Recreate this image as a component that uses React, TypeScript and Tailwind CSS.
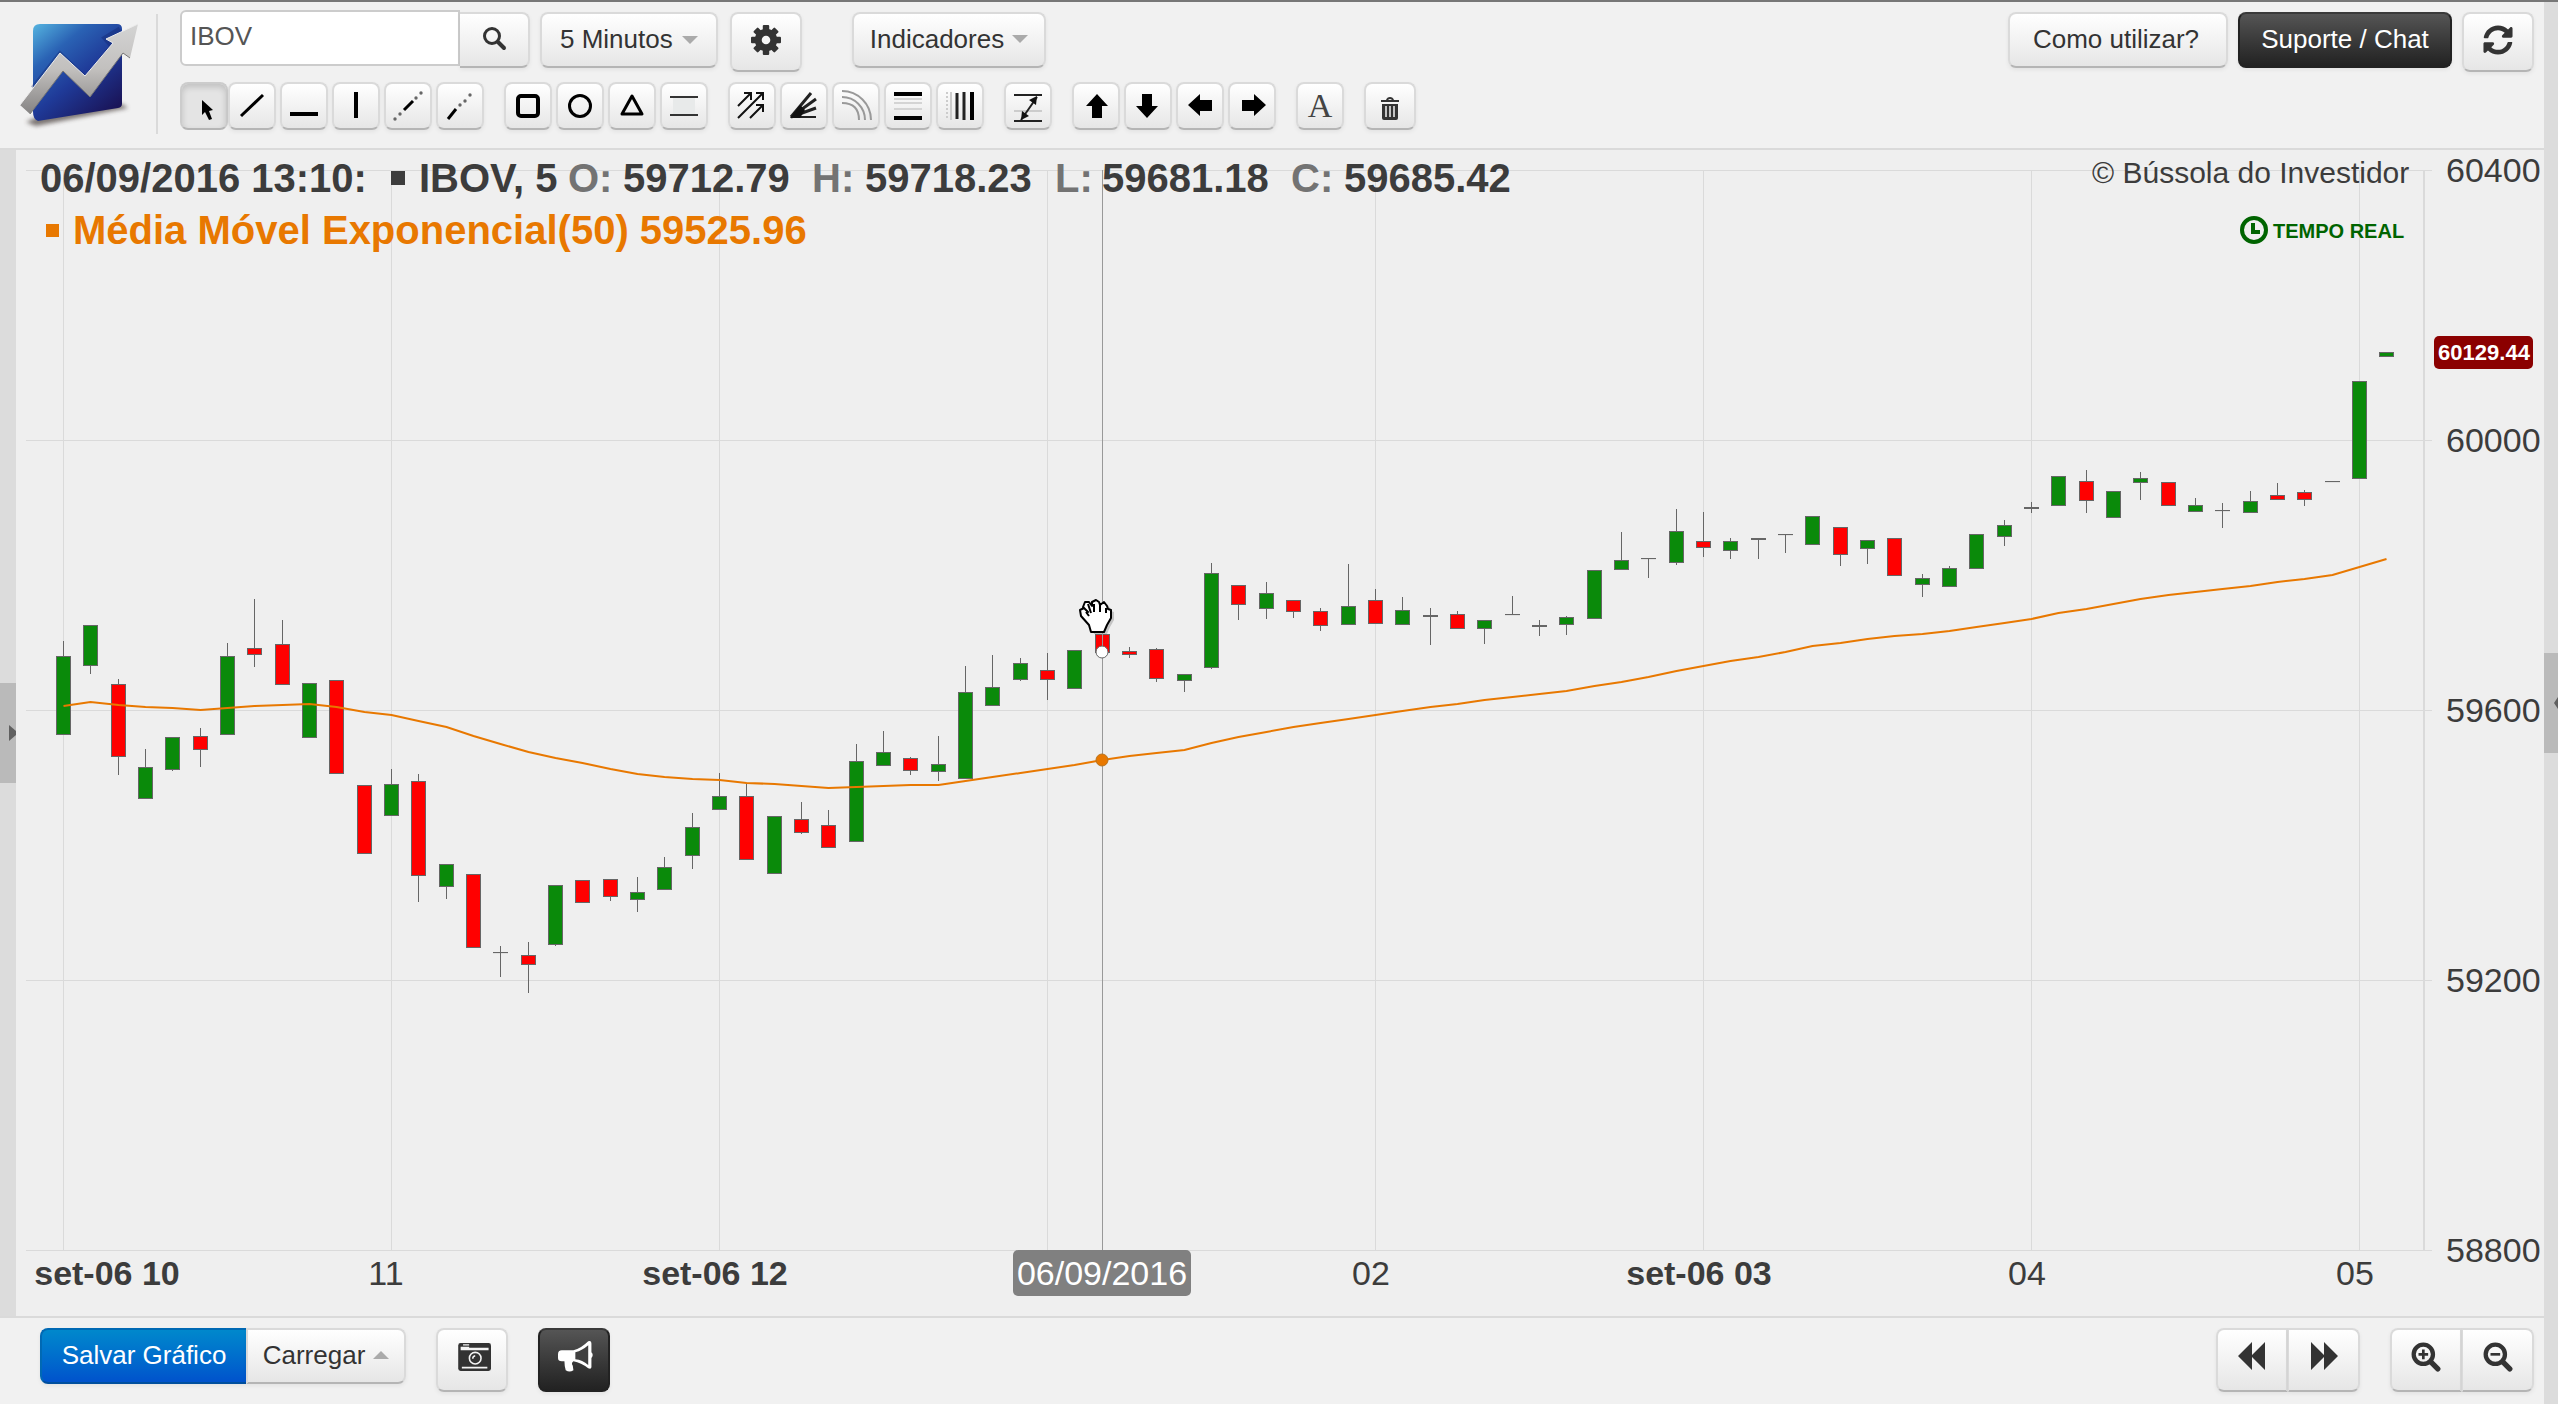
import type { ReactNode } from "react";
import { clsx } from "clsx";
import { FaSyncAlt } from "react-icons/fa";

const baseButton =
	"flex cursor-pointer items-center justify-center border-2 text-[26px] leading-8 shadow-[0_2px_4px_rgba(0,0,0,0.06)]";
const lightButton =
	"border-[#dadada] border-b-[#b5b5b5] bg-linear-to-b from-white to-[#e6e6e6] text-[#333]";
const darkButton =
	"border-[#222] border-t-[#3a3a3a] bg-linear-to-b from-[#555] to-[#222] text-white";

type Candle = [high: number, top: number, bottom: number, low: number, kind: "u" | "d" | "n"];

// Vertical positions in plot units, one entry for every 5 minutes
const candles: Candle[] = [
	[641, 656, 734, 734, "u"],
	[625, 625, 665, 673, "u"],
	[679, 684, 756, 774, "d"],
	[749, 767, 798, 798, "u"],
	[737, 737, 769, 770, "u"],
	[728, 736, 749, 766, "d"],
	[643, 656, 734, 734, "u"],
	[599, 648, 654, 666, "d"],
	[620, 644, 684, 684, "d"],
	[683, 683, 737, 737, "u"],
	[680, 680, 773, 773, "d"],
	[785, 785, 853, 853, "d"],
	[769, 784, 815, 815, "u"],
	[774, 781, 875, 901, "d"],
	[864, 864, 886, 898, "u"],
	[874, 874, 947, 947, "d"],
	[946, 952, 952, 976, "n"],
	[942, 955, 964, 992, "d"],
	[885, 885, 944, 945, "u"],
	[880, 880, 902, 902, "d"],
	[879, 879, 896, 900, "d"],
	[877, 892, 899, 911, "u"],
	[857, 867, 889, 889, "u"],
	[813, 827, 855, 868, "u"],
	[773, 796, 809, 809, "u"],
	[783, 796, 859, 859, "d"],
	[816, 816, 873, 873, "u"],
	[802, 819, 832, 833, "d"],
	[810, 825, 847, 847, "d"],
	[744, 761, 841, 841, "u"],
	[731, 752, 765, 765, "u"],
	[757, 758, 770, 774, "d"],
	[736, 764, 771, 780, "u"],
	[666, 692, 778, 778, "u"],
	[655, 687, 705, 705, "u"],
	[658, 663, 679, 680, "u"],
	[653, 670, 679, 699, "d"],
	[650, 650, 688, 688, "u"],
	[634, 634, 652, 652, "d"],
	[647, 651, 654, 657, "d"],
	[648, 649, 678, 681, "d"],
	[674, 674, 680, 691, "u"],
	[563, 573, 667, 668, "u"],
	[585, 585, 604, 619, "d"],
	[582, 593, 608, 618, "u"],
	[600, 600, 611, 617, "d"],
	[608, 611, 625, 630, "d"],
	[564, 606, 624, 624, "u"],
	[589, 600, 623, 623, "d"],
	[597, 610, 624, 624, "u"],
	[608, 615, 616, 644, "n"],
	[611, 614, 628, 628, "d"],
	[620, 620, 628, 643, "u"],
	[596, 614, 614, 614, "n"],
	[620, 625, 626, 635, "n"],
	[616, 617, 624, 634, "u"],
	[570, 570, 618, 618, "u"],
	[532, 560, 569, 569, "u"],
	[558, 558, 558, 577, "n"],
	[509, 531, 562, 564, "u"],
	[512, 541, 547, 556, "d"],
	[538, 541, 550, 558, "u"],
	[538, 538, 539, 558, "n"],
	[534, 534, 534, 552, "n"],
	[516, 516, 544, 544, "u"],
	[527, 527, 554, 565, "d"],
	[540, 540, 548, 563, "u"],
	[538, 538, 575, 575, "d"],
	[574, 578, 584, 596, "u"],
	[566, 568, 586, 586, "u"],
	[534, 534, 568, 568, "u"],
	[520, 525, 536, 545, "u"],
	[502, 507, 508, 512, "n"],
	[476, 476, 505, 505, "u"],
	[470, 481, 500, 512, "d"],
	[491, 491, 517, 517, "u"],
	[472, 478, 482, 499, "u"],
	[482, 482, 505, 505, "d"],
	[498, 505, 511, 511, "u"],
	[503, 510, 510, 527, "n"],
	[491, 501, 512, 512, "u"],
	[483, 495, 499, 499, "d"],
	[490, 492, 499, 505, "d"],
	[481, 481, 481, 481, "n"],
	[381, 381, 478, 478, "u"],
	[352, 352, 356, 356, "u"],
];

const movingAverage = [
	706, 702, 705, 707, 708, 710, 708, 706, 705, 704, 707, 712, 715, 721, 727, 736, 744, 752, 758, 763, 769, 774, 777,
	779, 780, 783, 784, 786, 788, 787, 786, 785, 785, 781, 777, 773, 769, 765, 760, 756, 753, 750, 743, 737, 732, 727,
	723, 719, 715, 711, 707, 704, 700, 697, 694, 691, 686, 682, 677, 671, 666, 661, 657, 652, 646, 643, 639, 636, 634,
	631, 627, 623, 619, 613, 609, 604, 599, 595, 592, 589, 586, 582, 579, 575, 567, 559,
];

const priceLabels = [
	{ label: "60400", y: 170 },
	{ label: "60000", y: 440 },
	{ label: "59600", y: 710 },
	{ label: "59200", y: 980 },
	{ label: "58800", y: 1250 },
];

const timeLabels = [
	{ label: "set-06 10", index: 0, x: 107, bold: true },
	{ label: "11", index: 12, x: 386, bold: false },
	{ label: "set-06 12", index: 24, x: 715, bold: true },
	{ label: "", index: 36, x: 1042, bold: false },
	{ label: "02", index: 48, x: 1371, bold: false },
	{ label: "set-06 03", index: 60, x: 1699, bold: true },
	{ label: "04", index: 72, x: 2027, bold: false },
	{ label: "05", index: 84, x: 2355, bold: false },
];

const candleX = (index: number) => Math.floor(63.5 + (index * 82) / 3) + 0.5;

const candleFill = { u: "#0a8a0a", d: "#ff0000", n: "#666" };

const handOutline =
	"M1091 632 L1089 625 L1081 616 L1080 610 L1084 608 L1088 612 L1083 607 L1085 602 L1089 602 L1092 606 L1092 602 L1096 600 L1099 602 L1100 605 L1104 602 L1107 606 L1108 609 L1111 610 V618 L1107 625 L1104 632 Z";

function Logo() {
	return (
		<svg width="124" height="112" viewBox="18 20 124 112" role="img" aria-label="Bússola do Investidor">
			<defs>
				<linearGradient id="logo-panel" x1="0" y1="0" x2="0.75" y2="1">
					<stop offset="0" stopColor="#55b4e0" />
					<stop offset="0.3" stopColor="#2a62b4" />
					<stop offset="0.6" stopColor="#1f3a98" />
					<stop offset="1" stopColor="#1a1458" />
				</linearGradient>
				<linearGradient id="logo-arrow" x1="0" y1="0" x2="0" y2="1">
					<stop offset="0" stopColor="#d4d4d4" />
					<stop offset="0.5" stopColor="#c2c0be" />
					<stop offset="1" stopColor="#858383" />
				</linearGradient>
				<filter id="logo-shadow" x="-20%" y="-50%" width="140%" height="200%">
					<feGaussianBlur stdDeviation="2" />
				</filter>
			</defs>
			<path d="M26 122 L36 126 L128 108 L122 104 L40 116 Z" fill="#4a3f3c" opacity="0.7" filter="url(#logo-shadow)" />
			<path d="M40 24 H117 Q122 24 122 29 V104 Q122 107 118 108 L38 121 Q33 119 33 112 V31 Q33 24 40 24 Z" fill="url(#logo-panel)" />
			<path d="M33 88 L60 54 L86 79 L112 46 L105 38 L120 29" fill="none" stroke="#0f1f66" strokeWidth="5" opacity="0.35" />
			<path d="M20 105 L60 53 L85 76 L113 43 L106 39 L138 24 L130 58 L123 53 L90 97 L63 71 L30 114 Z" fill="url(#logo-arrow)" />
			<path d="M20 105 L60 53 L85 76 L113 43 L106 39 L138 24" fill="none" stroke="#ececec" strokeWidth="1" />
			<path d="M130 58 L123 53 L90 97 L63 71 L30 114" fill="none" stroke="#777" strokeWidth="1" />
		</svg>
	);
}

function Caret({ up = false }: { up?: boolean }) {
	return (
		<svg width="16" height="8" viewBox="0 0 16 8" fill="#aaa" aria-hidden="true">
			<path d={up ? "M0 8 L8 0 L16 8 Z" : "M0 0 H16 L8 8 Z"} />
		</svg>
	);
}

function Glyph({ children, size = 28 }: { children: ReactNode; size?: number }) {
	return (
		<svg width={size} height={size} viewBox="0 0 28 28" aria-hidden="true">
			{children}
		</svg>
	);
}

function SearchIcon() {
	return (
		<Glyph>
			<circle cx="12" cy="10" r="7.500" fill="none" stroke="#333" strokeWidth="3" />
			<path d="M18 16 L24 22" stroke="#333" strokeWidth="4" strokeLinecap="round" />
		</Glyph>
	);
}

function GearIcon() {
	return (
		<Glyph size={30}>
			{[0, 45, 90, 135].map((angle) => (
				<rect key={angle} x="11" y="0" width="6" height="28" rx="1" fill="#333" transform={`rotate(${angle} 14 14)`} />
			))}
			<circle cx="14" cy="14" r="10.500" fill="#333" />
			<circle cx="14" cy="14" r="4" fill="#f6f6f6" />
		</Glyph>
	);
}

function CameraIcon() {
	return (
		<Glyph size={34}>
			<path d="M3 0 H26 Q28 0 28 2 V21 Q28 23 26 23 H3 Q1 23 1 21 V2 Q1 0 3 0 Z" fill="#333" />
			<path d="M3 3 H10 V4 H26 V6 H3 Z M5 1 H10 V2 H5 Z M4 19.500 H25 V21 H4 Z" fill="#f4f4f4" />
			<circle cx="15" cy="12.500" r="4.800" fill="none" stroke="#f4f4f4" strokeWidth="1.300" />
			<path d="M13 13 A2.400 2.400 0 0 1 15 10.500" fill="none" stroke="#f4f4f4" strokeWidth="1.200" />
		</Glyph>
	);
}

function MegaphoneIcon() {
	return (
		<Glyph size={36}>
			<path
				d="M0 11 Q0 8 3 8 H12 Q18 6.500 23.500 1 Q26 0 26 3 V9.500 Q28 11.500 26 14 V21 Q26 23 23.500 22 Q18 17.500 12 16.500 Q10 18 11.500 20 L12 23.500 Q9 25.500 6 23.500 Q5 20 5 16.500 H3 Q0 16.500 0 14 Z"
				fill="#fff"
			/>
			<path d="M13.500 9.500 Q19 8 23.500 4 V19.500 Q19 15.500 13.500 15 Z" fill="#3f3f3f" />
		</Glyph>
	);
}

function ZoomIcon({ plus = false }: { plus?: boolean }) {
	return (
		<Glyph size={30}>
			<circle cx="11.500" cy="11.500" r="9" fill="none" stroke="#333" strokeWidth="4" />
			<path d="M18.500 18.500 L25 25" stroke="#333" strokeWidth="5" strokeLinecap="round" />
			<path d={plus ? "M7 11.500 H16 M11.500 7 V16" : "M7 11.500 H16"} stroke="#333" strokeWidth="2.500" />
		</Glyph>
	);
}

function RewindIcon() {
	return (
		<Glyph>
			<path d="M0 14 L14 0 V13 L27 0 V28 L14 15 V28 Z" fill="#333" />
		</Glyph>
	);
}

function ForwardIcon() {
	return (
		<Glyph>
			<path d="M28 14 L14 0 V13 L1 0 V28 L14 15 V28 Z" fill="#333" />
		</Glyph>
	);
}

type ToolProps = { label: string; active?: boolean; wide?: boolean; children: ReactNode };

function Tool({ label, active = false, wide = false, children }: ToolProps) {
	return (
		<button
			type="button"
			aria-label={label}
			aria-pressed={active}
			className={clsx(
				baseButton,
				"h-12 rounded-lg",
				wide ? "w-13" : "w-12",
				active
					? "border-[#ccc] border-b-[#b5b5b5] bg-[#e4e4e4] shadow-[inset_0_3px_6px_rgba(0,0,0,0.16)]"
					: lightButton,
			)}
		>
			{children}
		</button>
	);
}

function ToolIcon({ children }: { children: ReactNode }) {
	return (
		<svg
			width="44"
			height="44"
			viewBox="2 2 44 44"
			fill="none"
			stroke="#000"
			strokeWidth="3"
			className="shrink-0"
			aria-hidden="true"
		>
			{children}
		</svg>
	);
}

function DrawingTools() {
	return (
		<div className="flex gap-5" role="toolbar" aria-label="Ferramentas de desenho">
			<div className="flex">
				<Tool label="Cursor" active>
					<ToolIcon>
						<path d="M22 18 V33 L25 30 L29 38 L32 37 L29 29 L33 28 Z" fill="#000" stroke="none" />
					</ToolIcon>
				</Tool>
				<div className="flex gap-1">
					<Tool label="Linha">
						<ToolIcon>
							<path d="M13 34 L35 13" />
						</ToolIcon>
					</Tool>
					<Tool label="Linha horizontal">
						<ToolIcon>
							<path d="M10 32 H38" strokeWidth="4" />
						</ToolIcon>
					</Tool>
					<Tool label="Linha vertical">
						<ToolIcon>
							<path d="M24 10 V36" strokeWidth="4" />
						</ToolIcon>
					</Tool>
					<Tool label="Linha estendida">
						<ToolIcon>
							<path d="M20 28 L29 19" />
							<g fill="#666" stroke="none">
								<circle cx="11" cy="37" r="1.700" />
								<circle cx="16" cy="32" r="1.700" />
								<circle cx="32" cy="16" r="1.700" />
								<circle cx="37" cy="11" r="1.700" />
							</g>
						</ToolIcon>
					</Tool>
					<Tool label="Semirreta">
						<ToolIcon>
							<path d="M12 37 L20 27" />
							<g fill="#666" stroke="none">
								<circle cx="24" cy="23" r="1.700" />
								<circle cx="29" cy="19" r="1.700" />
								<circle cx="34" cy="13" r="1.700" />
							</g>
						</ToolIcon>
					</Tool>
				</div>
			</div>
			<div className="flex gap-1">
				<Tool label="Retângulo">
					<ToolIcon>
						<rect x="14" y="14" width="20" height="20" rx="3" strokeWidth="4" />
					</ToolIcon>
				</Tool>
				<Tool label="Círculo">
					<ToolIcon>
						<circle cx="24" cy="24" r="10.500" />
					</ToolIcon>
				</Tool>
				<Tool label="Triângulo">
					<ToolIcon>
						<path d="M24 14 L34 32 H14 Z" strokeLinejoin="round" />
					</ToolIcon>
				</Tool>
				<Tool label="Canal">
					<ToolIcon>
						<rect x="13" y="16" width="22" height="16" fill="#e8eaea" stroke="none" />
						<path d="M10 15 H38 M10 33 H38" stroke="#333" strokeWidth="2" />
					</ToolIcon>
				</Tool>
			</div>
			<div className="flex gap-1">
				<Tool label="Pitchfork">
					<ToolIcon>
						<path
							d="M10 24 L23 11 M16 11 H23 V18 M10 36 L35 11 M28 11 H35 V18 M22 36 L35 23 M28 23 H35 V30"
							stroke="#111"
							strokeWidth="2"
						/>
					</ToolIcon>
				</Tool>
				<Tool label="Leque de Fibonacci">
					<ToolIcon>
						<path d="M11 35 L31 11 M11 35 L36 17 M11 35 L36 26" stroke="#222" strokeWidth="3" />
						<path d="M11 35 L36 35" stroke="#222" strokeWidth="2" />
						<path d="M10 36 L20 23 L25 28 L20 36 Z" fill="#111" stroke="none" />
					</ToolIcon>
				</Tool>
				<Tool label="Arcos de Fibonacci">
					<ToolIcon>
						<path
							d="M10 9 A29 29 0 0 1 39 38 M10 15 A23 23 0 0 1 33 38 M10 21 Q27 21 27 38"
							stroke="#999"
							strokeWidth="2"
						/>
					</ToolIcon>
				</Tool>
				<Tool label="Retração de Fibonacci">
					<ToolIcon>
						<path d="M10 12 H38 M10 36 H38" strokeWidth="4" />
						<path d="M10 17 H38 M10 21 H38 M10 27 H38" stroke="#d4d4d4" strokeWidth="2" />
					</ToolIcon>
				</Tool>
				<Tool label="Zonas de tempo">
					<ToolIcon>
						<path d="M11 10 V38" stroke="#ccc" strokeWidth="2" strokeDasharray="2 2" />
						<path d="M15 10 V38" stroke="#ccc" strokeWidth="2" />
						<path d="M21 11 V37 M28 10 V38" stroke="#222" strokeWidth="3" />
						<path d="M36 10 V38" strokeWidth="4" />
					</ToolIcon>
				</Tool>
			</div>
			<Tool label="Medida">
				<ToolIcon>
					<path d="M10 29 H38" stroke="#ccc" strokeWidth="2" />
					<path d="M10 13 H38 M10 39 H38 M17 38 L33 15" stroke="#222" strokeWidth="2" />
					<path d="M33 14 L32 23 L25 18 Z M17 38 L18 29 L25 34 Z" fill="#111" stroke="none" />
				</ToolIcon>
			</Tool>
			<div className="flex gap-1">
				<Tool label="Seta para cima">
					<ToolIcon>
						<path d="M25 12 L36 24 H30 V36 H20 V24 H14 Z" fill="#000" stroke="none" />
					</ToolIcon>
				</Tool>
				<Tool label="Seta para baixo">
					<ToolIcon>
						<path d="M23 36 L12 24 H18 V12 H28 V24 H34 Z" fill="#000" stroke="none" />
					</ToolIcon>
				</Tool>
				<Tool label="Seta para esquerda">
					<ToolIcon>
						<path d="M12 23 L24 12 V18 H36 V29 H24 V34 Z" fill="#000" stroke="none" />
					</ToolIcon>
				</Tool>
				<Tool label="Seta para direita">
					<ToolIcon>
						<path d="M38 23 L26 12 V18 H14 V29 H26 V34 Z" fill="#000" stroke="none" />
					</ToolIcon>
				</Tool>
			</div>
			<Tool label="Texto">
				<span className="font-['Liberation_Serif',serif] text-[34px] text-[#444]">A</span>
			</Tool>
			<Tool label="Apagar" wide>
				<svg width="20" height="24" viewBox="0 0 20 24" className="mt-1.5" aria-hidden="true">
					<path d="M1 3 H6 Q7 0 10 0 Q13 0 14 3 H19 V5 H1 Z M8 3 H12 Q10 1 8 3 Z" fill="#333" fillRule="evenodd" />
					<path d="M2 7 H18 V21 Q18 23 16 23 H4 Q2 23 2 21 Z" fill="#333" />
					<path d="M6 9 V20 M10 9 V20 M14 9 V20" stroke="#f4f4f4" strokeWidth="1.500" />
				</svg>
			</Tool>
		</div>
	);
}

function Header() {
	return (
		<header className="flex items-start justify-between border-b-2 border-[#dadada] bg-[#f1f1f1] pb-3.5 pl-[18px] pr-2.5 pt-2">
			<div className="flex">
				<div className="mt-2.5 h-[112px]">
					<Logo />
				</div>
				<div className="ml-3.5 mr-[22px] mt-1 h-[120px] w-0.5 bg-[#dadada]" />
				<div className="flex flex-col gap-2.5">
					<div className="flex items-start">
						<form className="flex items-start" role="search" onSubmit={(event) => event.preventDefault()}>
							<input
								aria-label="Ativo"
								defaultValue="IBOV"
								className="h-14 w-[280px] rounded-l-md border-2 border-[#ccc] bg-white px-2 pb-1 text-[26px] text-[#555] outline-none"
							/>
							<button
								type="submit"
								aria-label="Buscar"
								className={clsx(baseButton, lightButton, "mt-0.5 h-14 w-[70px] rounded-r-lg border-l-0")}
							>
								<SearchIcon />
							</button>
						</form>
						<div className="relative ml-2.5 mt-0.5">
							<select
								aria-label="Periodicidade"
								defaultValue="5"
								className={clsx(baseButton, lightButton, "h-14 w-[178px] appearance-none rounded-lg pb-0.5 pl-[18px]")}
							>
								<option value="5">5 Minutos</option>
								<option value="15">15 Minutos</option>
							</select>
							<div className="pointer-events-none absolute right-5 top-6">
								<Caret />
							</div>
						</div>
						<button
							type="button"
							aria-label="Configurações"
							className={clsx(baseButton, lightButton, "ml-3 mt-0.5 h-15 w-18 rounded-lg pb-1")}
						>
							<GearIcon />
						</button>
						<button
							type="button"
							aria-haspopup="menu"
							className={clsx(baseButton, lightButton, "ml-[50px] mt-0.5 h-14 w-[194px] gap-2 rounded-lg pb-0.5")}
						>
							Indicadores <Caret />
						</button>
					</div>
					<DrawingTools />
				</div>
			</div>
			<div className="mt-0.5 flex items-start gap-2.5">
				<a href="#como-utilizar" className={clsx(baseButton, lightButton, "h-14 w-55 rounded-lg pb-0.5 pr-1")}>
					Como utilizar?
				</a>
				<button type="button" className={clsx(baseButton, darkButton, "h-14 w-[214px] rounded-lg pb-0.5")}>
					Suporte / Chat
				</button>
				<button
					type="button"
					aria-label="Atualizar"
					className={clsx(baseButton, lightButton, "h-15 w-18 rounded-lg pb-1 text-[30px]")}
				>
					<FaSyncAlt />
				</button>
			</div>
		</header>
	);
}

function HandCursor() {
	return (
		<g strokeLinejoin="round">
			<path d={handOutline} fill="#999" opacity="0.5" transform="translate(3 2)" />
			<path d={handOutline} fill="#fff" stroke="#000" strokeWidth="2" />
			<path d="M1088 604 L1091 613 M1094 604 V612 M1100 604 V612 M1106 608 V613 M1086 612 L1089 616" fill="none" stroke="#000" strokeWidth="2" />
		</g>
	);
}

function Chart() {
	const linePoints = movingAverage.map((y, index) => `${candleX(index)},${y}`).join(" ");

	return (
		<svg
			viewBox="16 150 2528 1166"
			className="block h-auto w-full min-w-0 flex-1 bg-[#efefef] font-['Liberation_Sans',Arial,sans-serif]"
			role="img"
			aria-label="Gráfico de candles IBOV, 5 minutos"
		>
			<g stroke="#dadada">
				{priceLabels.map(({ label, y }) => (
					<line key={label} x1="26" x2="2432" y1={y + 0.5} y2={y + 0.5} />
				))}
				{timeLabels.map(({ index }) => (
					<line key={index} x1={candleX(index)} x2={candleX(index)} y1="170" y2="1250" />
				))}
				<line x1="2424" x2="2424" y1="170" y2="1251" strokeWidth="2" />
			</g>
			<g fill="#3c3c3c" fontSize="34">
				{priceLabels.map(({ label, y }) => (
					<text key={label} x="2446" y={y + 12}>
						{label}
					</text>
				))}
				{timeLabels.map(({ label, index, x, bold }) => (
					<text key={index} x={x} y="1285" textAnchor="middle" fontWeight={bold ? 700 : 400}>
						{label}
					</text>
				))}
			</g>
			<g stroke="#666">
				{candles.map(([high, top, bottom, low, kind], index) => {
					const x = candleX(index);
					return (
						<g key={index}>
							<line x1={x} x2={x} y1={high} y2={low + 1} />
							<rect x={x - 7} y={top + 0.5} width="14" height={Math.max(bottom - top, 0.1)} fill={candleFill[kind]} />
						</g>
					);
				})}
			</g>
			<polyline points={linePoints} fill="none" stroke="#e87800" strokeWidth="2" />
			<line x1="1102.500" x2="1102.500" y1="170" y2="1250" stroke="#999" />
			<circle cx="1102" cy="652" r="6" fill="#fff" stroke="#666" />
			<circle cx="1102" cy="760" r="6" fill="#e87800" stroke="#b8741f" />
			<HandCursor />

			<g fontSize="40" fontWeight="700" fill="#3c3c3c">
				<text x="40" y="192">
					06/09/2016 13:10:
				</text>
				<rect x="391" y="171" width="14" height="14" />
				<text x="419" y="192">
					IBOV, 5
				</text>
				<text x="623" y="192">
					59712.79
				</text>
				<text x="865" y="192">
					59718.23
				</text>
				<text x="1102" y="192">
					59681.18
				</text>
				<text x="1344" y="192">
					59685.42
				</text>
				<g fill="#737373">
					<text x="568" y="192">
						O:
					</text>
					<text x="812" y="192">
						H:
					</text>
					<text x="1055" y="192">
						L:
					</text>
					<text x="1291" y="192">
						C:
					</text>
				</g>
				<g fill="#e87800">
					<rect x="46" y="224" width="13" height="13" />
					<text x="73" y="244">
						Média Móvel Exponencial(50) 59525.96
					</text>
				</g>
			</g>

			<text x="2092" y="183" fontSize="30" fill="#3c3c3c">
				© Bússola do Investidor
			</text>
			<circle cx="2254" cy="230" r="12" fill="none" stroke="#006400" strokeWidth="4" />
			<path d="M2253 223 V232 H2260" fill="none" stroke="#006400" strokeWidth="4" />
			<text x="2273" y="238" fontSize="20" fontWeight="700" fill="#006400">
				TEMPO REAL
			</text>

			<rect x="2434" y="336" width="99" height="33" rx="5" fill="#8b0000" />
			<text x="2484" y="360" fontSize="22" fontWeight="700" fill="#fff" textAnchor="middle">
				60129.44
			</text>
			<rect x="1013" y="1250" width="178" height="46" rx="5" fill="#808080" />
			<text x="1102" y="1285" fontSize="34" fill="#fff" textAnchor="middle">
				06/09/2016
			</text>
		</svg>
	);
}

function Footer() {
	return (
		<footer className="flex flex-1 items-start justify-between border-t-2 border-[#dadada] bg-[#f1f1f1] pb-3 pl-10 pr-2.5 pt-2.5">
			<div className="flex items-start gap-[30px]">
				<div className="flex">
					<button
						type="button"
						className={clsx(
							baseButton,
							"h-14 w-[206px] rounded-l-lg border-r-0 border-[#0069b4] border-b-[#004f9e] bg-linear-to-b from-[#0088cc] to-[#0052cc] pb-0.5 text-white",
						)}
					>
						Salvar Gráfico
					</button>
					<button
						type="button"
						aria-haspopup="menu"
						className={clsx(baseButton, lightButton, "h-14 w-40 gap-2 rounded-r-lg pb-0.5")}
					>
						Carregar <Caret up />
					</button>
				</div>
				<button
					type="button"
					aria-label="Capturar imagem"
					className={clsx(baseButton, lightButton, "h-16 w-18 rounded-lg pl-1")}
				>
					<CameraIcon />
				</button>
				<button
					type="button"
					aria-label="Compartilhar"
					className={clsx(baseButton, darkButton, "h-16 w-18 rounded-lg pb-1 pl-1")}
				>
					<MegaphoneIcon />
				</button>
			</div>
			<div className="flex gap-[30px]">
				<div className="flex">
					<button
						type="button"
						aria-label="Voltar"
						className={clsx(baseButton, lightButton, "h-16 w-18 rounded-l-lg pb-2")}
					>
						<RewindIcon />
					</button>
					<button
						type="button"
						aria-label="Avançar"
						className={clsx(baseButton, lightButton, "h-16 w-18 rounded-r-lg border-l pb-2")}
					>
						<ForwardIcon />
					</button>
				</div>
				<div className="flex">
					<button
						type="button"
						aria-label="Aumentar zoom"
						className={clsx(baseButton, lightButton, "h-16 w-18 rounded-l-lg pb-1.5")}
					>
						<ZoomIcon plus />
					</button>
					<button
						type="button"
						aria-label="Diminuir zoom"
						className={clsx(baseButton, lightButton, "h-16 w-18 rounded-r-lg border-l pb-1.5")}
					>
						<ZoomIcon />
					</button>
				</div>
			</div>
		</footer>
	);
}

export default function App() {
	return (
		<div className="flex min-h-screen flex-col border-t-2 border-[#777] bg-[#f1f1f1] font-['Liberation_Sans',Arial,sans-serif]">
			<div className="flex flex-1">
				<main className="flex min-w-0 flex-1 flex-col">
					<Header />
					<div className="flex">
						<aside className="flex w-4 flex-col justify-center bg-[#dcdcdc]">
							<button type="button" aria-label="Abrir painel esquerdo" className="flex h-25 w-4 items-center justify-end bg-[#bababa]">
								<svg width="7" height="16" viewBox="0 0 7 16" aria-hidden="true">
									<path d="M0 0 L7 6 V10 L0 16 Z" fill="#606060" />
								</svg>
							</button>
						</aside>
						<Chart />
					</div>
					<Footer />
				</main>
				<aside className="flex w-3.5 flex-col justify-center bg-[#dcdcdc]">
					<button type="button" aria-label="Abrir painel direito" className="flex h-25 w-3.5 items-center justify-end bg-[#bababa]">
						<svg width="4" height="12" viewBox="0 0 4 12" aria-hidden="true">
							<path d="M4 0 L0 6 L4 12 Z" fill="#606060" />
						</svg>
					</button>
				</aside>
			</div>
		</div>
	);
}
